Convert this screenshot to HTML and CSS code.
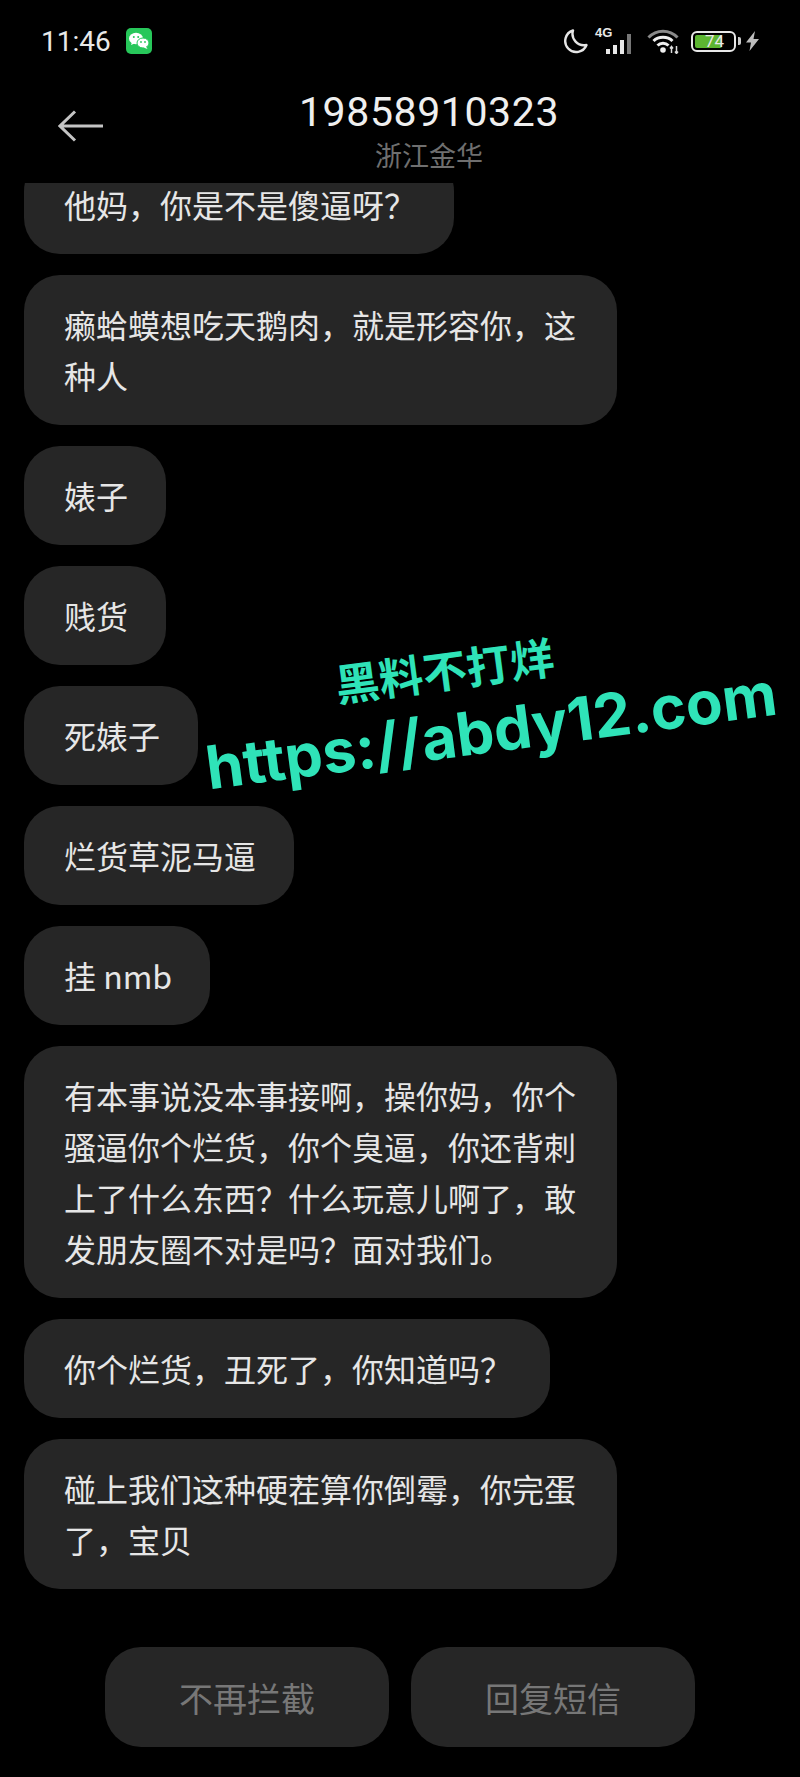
FILE: index.html
```html
<!DOCTYPE html>
<html lang="zh-CN">
<head>
  <meta charset="UTF-8" />
  <title>19858910323</title>
  <meta name="viewport" content="width=device-width, initial-scale=1" />
  <link rel="stylesheet" href="styles.css">
</head>
<body>
  <div class="screen">
    <div class="status-bar">
      <div class="status-left">
        <span class="time">11:46</span>
        <svg class="wechat" width="26" height="26" viewBox="0 0 26 26">
          <rect width="26" height="26" rx="5" fill="#27c75a"/>
          <ellipse cx="10" cy="10.5" rx="7" ry="5.8" fill="#fff"/>
          <path d="M6 14l-1 3 3.500-1.500z" fill="#fff"/>
          <ellipse cx="17" cy="15" rx="6" ry="5" fill="#fff" stroke="#27c75a" stroke-width="1"/>
          <path d="M20 18.500l1.500 2.500-4-1.500z" fill="#fff"/>
          <circle cx="7.800" cy="9" r="1" fill="#27c75a"/>
          <circle cx="12.200" cy="9" r="1" fill="#27c75a"/>
          <circle cx="15" cy="14" r=".9" fill="#27c75a"/>
          <circle cx="19" cy="14" r=".9" fill="#27c75a"/>
        </svg>
      </div>
      <div class="status-right">
        <svg class="moon" width="26" height="26" viewBox="0 0 26 26">
          <path d="M10 2.500A11 11 0 1 0 23.500 17 11.500 11.500 0 0 1 10 2.500z" fill="none" stroke="#e6e6e6" stroke-width="2.400" stroke-linejoin="round"/>
        </svg>
        <div class="signal">
          <span class="net">4G</span>
          <i class="bar b1"></i><i class="bar b2"></i><i class="bar b3"></i><i class="bar b4"></i>
        </div>
        <svg class="wifi" width="34" height="26" viewBox="0 0 34 26">
          <path d="M1.500 9.500C9.500 1 22.500 1 30.500 9.500" fill="none" stroke="#8a8a8a" stroke-width="3"/>
          <path d="M6.500 13C11.500 8 20.500 8 25.500 13" fill="none" stroke="#efefef" stroke-width="3"/>
          <path d="M10.500 17.500C13.500 14.500 18.500 14.500 21.500 17.500" fill="none" stroke="#efefef" stroke-width="3"/>
          <circle cx="16" cy="22" r="2.800" fill="#efefef"/>
          <path d="M24.500 25v-6M23 20.500l1.500-2 1.500 2M29.500 18v7M28 23.500l1.500 2 1.500-2" fill="none" stroke="#dcdcdc" stroke-width="1.500"/>
        </svg>
        <div class="battery">
          <div class="battery-body">
            <div class="battery-fill"></div>
            <span class="battery-num">74</span>
          </div>
          <i class="battery-nub"></i>
        </div>
        <svg class="bolt" width="13" height="20" viewBox="0 0 13 20">
          <path d="M9 0L0 11.500h5L3.500 20 13 8H7.500z" fill="#bdbdbd"/>
        </svg>
      </div>
    </div>

    <div class="header">
      <svg class="back" width="46" height="32" viewBox="0 0 46 32">
        <path d="M45 16H2M17 1.500L2 16l15 14.500" fill="none" stroke="#c4c4c4" stroke-width="3"/>
      </svg>
      <div class="title">
        <div class="phone">19858910323</div>
        <div class="place">浙江金华</div>
      </div>
    </div>

    <div class="messages">
      <div class="bubble first">他妈，你是不是傻逼呀？</div>
      <div class="bubble">癞蛤蟆想吃天鹅肉，就是形容你，这种人</div>
      <div class="bubble">婊子</div>
      <div class="bubble">贱货</div>
      <div class="bubble">死婊子</div>
      <div class="bubble">烂货草泥马逼</div>
      <div class="bubble">挂 nmb</div>
      <div class="bubble">有本事说没本事接啊，操你妈，你个骚逼你个烂货，你个臭逼，你还背刺上了什么东西？什么玩意儿啊了，敢发朋友圈不对是吗？面对我们。</div>
      <div class="bubble">你个烂货，丑死了，你知道吗？</div>
      <div class="bubble">碰上我们这种硬茬算你倒霉，你完蛋了，宝贝</div>
    </div>

    <div class="actions">
      <button class="action">不再拦截</button>
      <button class="action">回复短信</button>
    </div>

    <div class="watermark">
      <div class="wm-cn">黑料不打烊</div>
      <div class="wm-url">https://abdy12.com</div>
    </div>
  </div>
</body>
</html>
```

FILE: styles.css
```css
* {
  box-sizing: border-box;
}
body {
  margin: 0;
  background: #000;
  font-family: "Noto Sans CJK SC", "Noto Sans", sans-serif;
}
.screen {
  position: relative;
  width: 800px;
  height: 1777px;
  overflow: hidden;
  background: #000;
}
.status-bar {
  display: flex;
  justify-content: space-between;
  align-items: center;
  height: 82px;
  padding: 0 41px;
}
.status-left {
  display: flex;
  align-items: center;
  gap: 15px;
}
.time {
  font-family: "Roboto", sans-serif;
  font-size: 28px;
  color: #e8e8e8;
}
.status-right {
  display: flex;
  align-items: center;
}
.signal {
  position: relative;
  display: flex;
  align-items: flex-end;
  gap: 3px;
  width: 42px;
  height: 26px;
  margin-left: 6px;
  padding-left: 11px;
}
.net {
  position: absolute;
  left: 0;
  top: -3px;
  font-family: "Liberation Sans", sans-serif;
  font-size: 13px;
  font-weight: 700;
  color: #e8e8e8;
}
.bar {
  width: 4px;
  background: #e8e8e8;
}
.b1 { height: 5px; }
.b2 { height: 9px; }
.b3 { height: 14px; }
.b4 { height: 20px; background: #777; }
.wifi {
  margin-left: 10px;
}
.battery {
  display: flex;
  align-items: center;
  gap: 2px;
  margin-left: 10px;
}
.battery-body {
  position: relative;
  width: 45px;
  height: 21px;
  border: 2px solid #e8e8e8;
  border-radius: 6px;
  padding: 2px;
}
.battery-fill {
  width: 74%;
  height: 100%;
  background: #5cb531;
  border-radius: 2px;
}
.battery-num {
  position: absolute;
  left: 12px;
  top: -2px;
  font-family: "Roboto", sans-serif;
  font-size: 17px;
  line-height: 21px;
  color: #e8e8e8;
}
.battery-nub {
  width: 3px;
  height: 8px;
  background: #ccc;
  border-radius: 0 2px 2px 0;
}
.bolt {
  margin-left: 5px;
}
.header {
  display: grid;
  grid-template-columns: 1fr auto 1fr;
  align-items: center;
  height: 101px;
  padding: 0 0 4px 58px;
}
.back {
  margin-bottom: 10px;
}
.title {
  text-align: center;
}
.phone {
  font-family: "Roboto", sans-serif;
  font-size: 41px;
  line-height: 48px;
  letter-spacing: 0.6px;
  color: #efefef;
}
.place {
  font-size: 27px;
  line-height: 38px;
  color: #6f6f6f;
}
.messages {
  display: flex;
  flex-direction: column;
  align-items: flex-start;
  gap: 21px;
  height: 1447px;
  padding-left: 24px;
  overflow: hidden;
}
.bubble {
  max-width: 593px;
  padding: 24px 38px 24px 40px;
  background: #262626;
  border-radius: 36px;
  font-size: 32px;
  line-height: 51px;
  color: #e6e6e6;
}
.first {
  margin-top: -28px;
}
.actions {
  position: absolute;
  left: 0;
  right: 0;
  top: 1647px;
  display: flex;
  justify-content: center;
  gap: 22px;
}
.action {
  width: 284px;
  height: 100px;
  border: none;
  border-radius: 36px;
  background: #262626;
  font-family: inherit;
  font-size: 34px;
  color: #777;
}
.watermark {
  position: absolute;
  left: 200px;
  top: 640px;
  width: 520px;
  text-align: center;
  font-family: "Inter", "Noto Sans CJK SC", sans-serif;
  font-weight: 700;
  color: #2fe3b8;
  transform: rotate(-7.500deg);
}
.wm-cn {
  font-size: 44px;
  line-height: 60px;
  margin-left: -22px;
}
.wm-url {
  font-size: 60px;
  line-height: 68px;
  white-space: nowrap;
}
```
